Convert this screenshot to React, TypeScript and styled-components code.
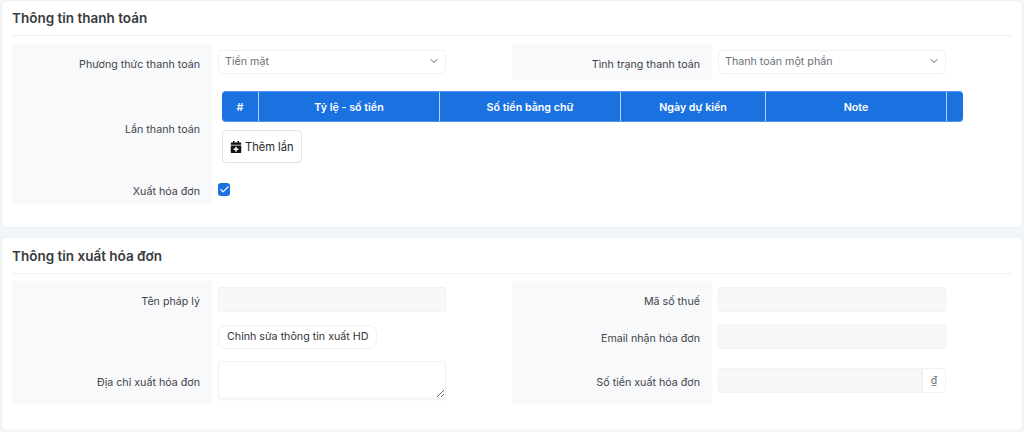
import React from 'react'
import styled, { createGlobalStyle } from 'styled-components'
import { FaCalendarPlus } from 'react-icons/fa'
import { Check, ChevronDown } from 'lucide-react'

const GlobalStyle = createGlobalStyle`
  html, body {
    margin: 0;
    padding: 0;
    height: 100%;
    overflow: hidden;
    background-color: #f3f6f8;
  }
  * {
    box-sizing: border-box;
  }
`
const Page = styled.div`
  width: 1024px;
  height: 432px;
  padding: 0 1px 0 1px;
  display: flex;
  flex-direction: column;
  gap: 9px;
  font-family: Inter, 'Noto Sans', sans-serif;
  font-size: 10.7px;
  color: #3f4349;
`
const Card = styled.section<{ $height: number }>`
  height: ${(p) => p.$height}px;
  padding: 0 10px;
  background-color: #ffffff;
  border: 1px solid #eef1f4;
  border-radius: 6px;
`
const CardHeader = styled.h3<{ $height: number; $gap: number }>`
  height: ${(p) => p.$height}px;
  margin: 0 0 ${(p) => p.$gap}px;
  display: flex;
  align-items: center;
  font-size: 13.5px;
  font-weight: 600;
  color: #383b40;
  border-bottom: 1px solid #eff1f3;
`
const Columns = styled.div`
  display: grid;
  grid-template-columns: 500px 500px;
`
const Field = styled.div<{ $height: number }>`
  display: flex;
  height: ${(p) => p.$height}px;
`
const Label = styled.div`
  flex: 0 0 200px;
  padding: 4px 12px 0 0;
  display: flex;
  align-items: center;
  justify-content: flex-end;
  background-color: #f8f9fb;
`
const Control = styled.div`
  flex: 1;
  min-width: 0;
  padding-left: 6px;
  display: flex;
  align-items: center;
`
const SelectBox = styled.div`
  width: 228px;
  height: 24px;
  padding: 0 5px 2px 6px;
  display: flex;
  align-items: center;
  justify-content: space-between;
  color: #6b7077;
  background-color: #ffffff;
  border: 1px solid #eff1f4;
  border-radius: 4px;
  svg {
    color: #555a60;
  }
`
const TextInput = styled.input`
  width: 228px;
  height: 25px;
  padding: 0 7px;
  background-color: #f6f8f9;
  border: 1px solid #f0f3f5;
  border-radius: 3px;
  outline: none;
`
const AddressInput = styled.textarea`
  display: block;
  width: 228px;
  height: 38px;
  padding: 4px 7px;
  background-color: #ffffff;
  border: 1px solid #f0f2f5;
  border-radius: 3px;
  box-shadow: 0 1px 2px rgba(60, 70, 80, 0.06);
  outline: none;
`
const AmountGroup = styled.div`
  display: flex;
  width: 228px;
  height: 25px;
`
const AmountInput = styled(TextInput)`
  flex: 1;
  width: auto;
  min-width: 0;
  border-radius: 3px 0 0 3px;
`
const Currency = styled.span`
  flex: 0 0 24px;
  display: flex;
  align-items: center;
  justify-content: center;
  font-size: 10.5px;
  color: #6b7077;
  border: 1px solid #eff1f4;
  border-radius: 0 3px 3px 0;
`
const PlainButton = styled.button`
  height: 24px;
  padding: 0 8px;
  font-family: inherit;
  font-size: 10.7px;
  color: #33363b;
  background-color: #ffffff;
  border: 1px solid #f0f2f4;
  border-radius: 8px;
`
const InstallmentArea = styled.div`
  padding: 11px 0 0 10px;
  display: flex;
  flex-direction: column;
  align-items: flex-start;
  gap: 8px;
`
const TableHead = styled.div`
  width: 741px;
  height: 31px;
  display: grid;
  grid-template-columns: 37px 181px 181px 145px 181px 16px;
  color: #ffffff;
  background-color: #1a72e1;
  border-top: 1px solid #4f97ee;
  border-bottom: 1px solid #4f97ee;
  border-radius: 4px;
  overflow: hidden;
`
const HeadCell = styled.div`
  padding-top: 1px;
  display: flex;
  align-items: center;
  justify-content: center;
  font-weight: 600;
  border-right: 1px solid #b5d3f7;
  &:last-child {
    border-right: none;
  }
`
const AddButton = styled.button`
  height: 33px;
  padding: 0 7px;
  display: flex;
  align-items: center;
  gap: 3px;
  font-family: inherit;
  font-size: 11.1px;
  color: #26282c;
  background-color: #ffffff;
  border: 1px solid #dfe2e6;
  border-radius: 4px;
`
const CheckBox = styled.span`
  width: 12px;
  height: 13px;
  display: flex;
  align-items: center;
  justify-content: center;
  color: #ffffff;
  background-color: #1a72e1;
  border-radius: 3px;
`

const columns = ['#', 'Tỷ lệ - số tiền', 'Số tiền bằng chữ', 'Ngày dự kiến', 'Note', '']

const App = () => {
  return (
    <Page>
      <GlobalStyle />
      <Card $height={228}>
        <CardHeader $height={35} $gap={8}>Thông tin thanh toán</CardHeader>
        <Columns>
          <Field $height={36}>
            <Label>Phương thức thanh toán</Label>
            <Control>
              <SelectBox>
                Tiền mặt
                <ChevronDown size={12} />
              </SelectBox>
            </Control>
          </Field>
          <Field $height={36}>
            <Label>Tình trạng thanh toán</Label>
            <Control>
              <SelectBox>
                Thanh toán một phần
                <ChevronDown size={12} />
              </SelectBox>
            </Control>
          </Field>
        </Columns>
        <Field $height={95}>
          <Label>Lần thanh toán</Label>
          <InstallmentArea>
            <TableHead>
              {columns.map((name, i) => (
                <HeadCell key={i}>{name}</HeadCell>
              ))}
            </TableHead>
            <AddButton>
              <FaCalendarPlus size={12} color="#111" />
              Thêm lần
            </AddButton>
          </InstallmentArea>
        </Field>
        <Field $height={29}>
          <Label>Xuất hóa đơn</Label>
          <Control>
            <CheckBox>
              <Check size={11} strokeWidth={2.5} />
            </CheckBox>
          </Control>
        </Field>
      </Card>
      <Card $height={194}>
        <CardHeader $height={36} $gap={7}>Thông tin xuất hóa đơn</CardHeader>
        <Columns>
          <Field $height={37}>
            <Label>Tên pháp lý</Label>
            <Control>
              <TextInput />
            </Control>
          </Field>
          <Field $height={37}>
            <Label>Mã số thuế</Label>
            <Control>
              <TextInput />
            </Control>
          </Field>
          <Field $height={37}>
            <Label />
            <Control>
              <PlainButton>Chỉnh sửa thông tin xuất HD</PlainButton>
            </Control>
          </Field>
          <Field $height={37}>
            <Label>Email nhận hóa đơn</Label>
            <Control>
              <TextInput />
            </Control>
          </Field>
          <Field $height={50}>
            <Label>Địa chỉ xuất hóa đơn</Label>
            <Control>
              <AddressInput />
            </Control>
          </Field>
          <Field $height={50}>
            <Label>Số tiền xuất hóa đơn</Label>
            <Control>
              <AmountGroup>
                <AmountInput />
                <Currency>₫</Currency>
              </AmountGroup>
            </Control>
          </Field>
        </Columns>
      </Card>
    </Page>
  )
}

export default App
